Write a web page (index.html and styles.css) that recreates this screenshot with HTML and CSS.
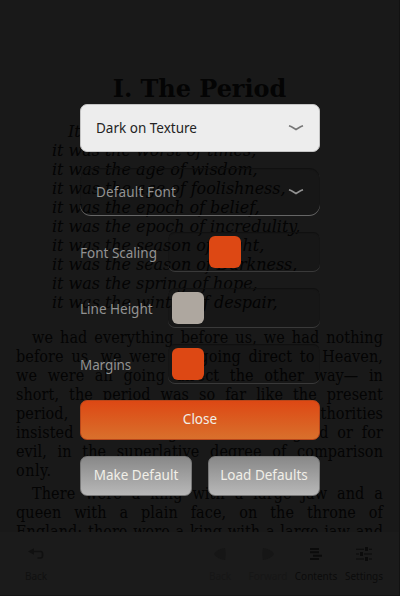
FILE: index.html
```
<!DOCTYPE html>
<html lang="en">
<head>
<meta charset="utf-8">
<title>I. The Period</title>
<link rel="stylesheet" href="styles.css">
</head>
<body>
<div class="reader">
  <main class="page">
    <h1>I. The Period</h1>
    <div class="verse">
      <p class="first">It was the best of times,</p>
      <p>it was the worst of times,</p>
      <p>it was the age of wisdom,</p>
      <p>it was the age of foolishness,</p>
      <p>it was the epoch of belief,</p>
      <p>it was the epoch of incredulity,</p>
      <p>it was the season of Light,</p>
      <p>it was the season of Darkness,</p>
      <p>it was the spring of hope,</p>
      <p>it was the winter of despair,</p>
    </div>
    <div class="prose">
      <p class="first">we had everything before us, we had nothing</p>
      <p>before us, we were all going direct to Heaven,</p>
      <p>we were all going direct the other way— in</p>
      <p>short, the period was so far like the present</p>
      <p>period, that some of its noisiest authorities</p>
      <p>insisted on its being received, for good or for</p>
      <p>evil, in the superlative degree of comparison</p>
      <p class="last">only.</p>
    </div>
    <div class="prose">
      <p class="first">There were a king with a large jaw and a</p>
      <p>queen with a plain face, on the throne of</p>
      <p>England; there were a king with a large jaw and</p>
    </div>
  </main>
  <nav class="toolbar">
    <div class="tool back"><svg width="18" height="16" viewBox="0 0 18 16"><path d="M4 5.500h9.500q2 0 2 2V10q0 2-2 2h-3" fill="none" stroke="currentColor" stroke-width="1.600"/><path d="M1 5.500 7 2.300v6.400z" fill="currentColor"/></svg><span>Back</span></div>
    <div class="tool off"><svg width="16" height="16" viewBox="0 0 16 16"><path d="M2 8Q5 3 13 2q1.500 6 0 12Q5 13 2 8z" fill="currentColor"/></svg><span>Back</span></div>
    <div class="tool off"><svg width="16" height="16" viewBox="0 0 16 16"><path d="M14 8Q11 3 3 2q-1.500 6 0 12Q11 13 14 8z" fill="currentColor"/></svg><span>Forward</span></div>
    <div class="tool"><svg width="16" height="16" viewBox="0 0 16 16"><path d="M2 2h9v2H2zM2 5.300h9v2H2zM5 8.700h9v2H5zM2 12h9v2H2z" fill="currentColor"/></svg><span>Contents</span></div>
    <div class="tool"><svg width="16" height="16" viewBox="0 0 16 16"><path d="M0 2.700h8v1H0zM13 2.700h3v1h-3zM0 7.500h3v1H0zM8 7.500h8v1H8zM0 12.500h8v1H0zM13 12.500h3v1h-3zM9 1h3v4H9zM4 6h3v4H4zM9 11h3v4H9z" fill="currentColor"/></svg><span>Settings</span></div>
  </nav>
  <section class="dialog">
    <div class="select paper"><span>Dark on Texture</span><svg width="16" height="8" viewBox="0 0 16 8"><path d="M1 1.800 3.500 2.700 8 5.500 12.500 2.700 15 1.800" fill="none" stroke="currentColor" stroke-width="1.600"/></svg></div>
    <div class="select inset"><span class="font-name">Default Font</span><svg width="16" height="8" viewBox="0 0 16 8"><path d="M1 1.800 3.500 2.700 8 5.500 12.500 2.700 15 1.800" fill="none" stroke="currentColor" stroke-width="1.600"/></svg></div>
    <div class="row"><span>Font Scaling</span><div class="slider mid"><i></i></div></div>
    <div class="row"><span>Line Height</span><div class="slider"><i class="idle"></i></div></div>
    <div class="row"><span class="margins">Margins</span><div class="slider"><i></i></div></div>
    <button class="close">Close</button>
    <div class="actions"><button>Make Default</button><button>Load Defaults</button></div>
  </section>
</div>
</body>
</html>
```
FILE: styles.css
```
* { box-sizing: border-box; }
body, h1, p { margin: 0; }
body { background: #191919; overflow: hidden; }
.reader {
  position: relative;
  width: 400px;
  height: 596px;
  display: flex;
  flex-direction: column;
  overflow: hidden;
  border-right: 1px solid #121212;
}
.page {
  height: 532px;
  padding: 74px 16px 0;
  overflow: hidden;
  color: #040404;
  font: 16px/19px "DejaVu Serif", serif;
}
h1 {
  font-size: 24px;
  line-height: 29px;
  font-weight: bold;
  text-align: center;
  letter-spacing: -.05px;
  margin-bottom: 19px;
}
.page p { white-space: nowrap; }
.verse { margin-left: 36px; font-style: italic; letter-spacing: -.04px; }
.verse .first { padding-left: 16px; }
.prose {
  width: 367px;
  margin-top: 16px;
  font-family: "DejaVu Serif Condensed", "DejaVu Serif", serif;
  font-stretch: condensed;
  letter-spacing: .1px;
}
.prose + .prose { margin-top: 4px; }
.prose p { text-align: justify; text-align-last: justify; white-space: normal; }
.prose .first { padding-left: 16px; }
.prose .last { text-align-last: left; letter-spacing: .5px; }
.toolbar {
  height: 64px;
  padding-right: 11px;
  display: flex;
  background: #1b1b1b;
  border-bottom: 1px solid #141414;
  color: #0b0b0b;
  font: 10px/12px "Noto Sans", sans-serif;
}
.tool {
  width: 48px;
  flex: none;
  padding-top: 14px;
  display: flex;
  flex-direction: column;
  align-items: center;
  gap: 8px;
}
.tool svg { height: 16px; }
.tool.back { margin: 0 auto 0 12px; color: #101010; }
.tool.off { color: #161616; }
.dialog {
  position: absolute;
  left: 80px;
  top: 104px;
  width: 240px;
  display: flex;
  flex-direction: column;
  gap: 16px;
  color: #929292;
  font: 13.5px/18px "Noto Sans", sans-serif;
}
.dialog span { white-space: nowrap; }
.font-name { letter-spacing: .15px; }
.margins { letter-spacing: -.1px; }
.select {
  height: 48px;
  padding: 0 16px;
  display: flex;
  align-items: center;
  justify-content: space-between;
}
.paper {
  background: #ededed;
  color: #242424;
  border: 1px solid #c4c4c4;
  border-radius: 7px;
  padding: 0 15px;
}
.paper svg { color: #777; }
.inset {
  border-radius: 11px;
  background: rgba(0, 0, 0, .06);
  box-shadow: inset 0 -1px 0 #666, inset 0 1px 1px #101010;
}
.row {
  height: 40px;
  display: flex;
  align-items: center;
  justify-content: space-between;
}
.row span { padding-top: 2px; }
.slider {
  width: 152px;
  height: 40px;
  padding: 4px;
  border-radius: 7px;
  background: rgba(0, 0, 0, .08);
  box-shadow: inset 0 -1px 0 #393939, inset 0 1px 1px #101010;
}
.slider i {
  display: block;
  width: 32px;
  height: 32px;
  border-radius: 6px;
  background: #dd4814;
}
.slider .idle { background: #aea79f; }
.mid i { margin-left: 37px; }
.dialog button {
  height: 40px;
  padding: 0 0 2px;
  border: 1px solid #777;
  border-radius: 7px;
  color: #f1efe8;
  font: inherit;
}
.dialog .close {
  background: linear-gradient(#dd4814, #d9702c);
  border-color: #b8461a;
}
.actions { display: flex; gap: 16px; }
.actions button { flex: 1; background: linear-gradient(#888, #b8b8b8); }
```
